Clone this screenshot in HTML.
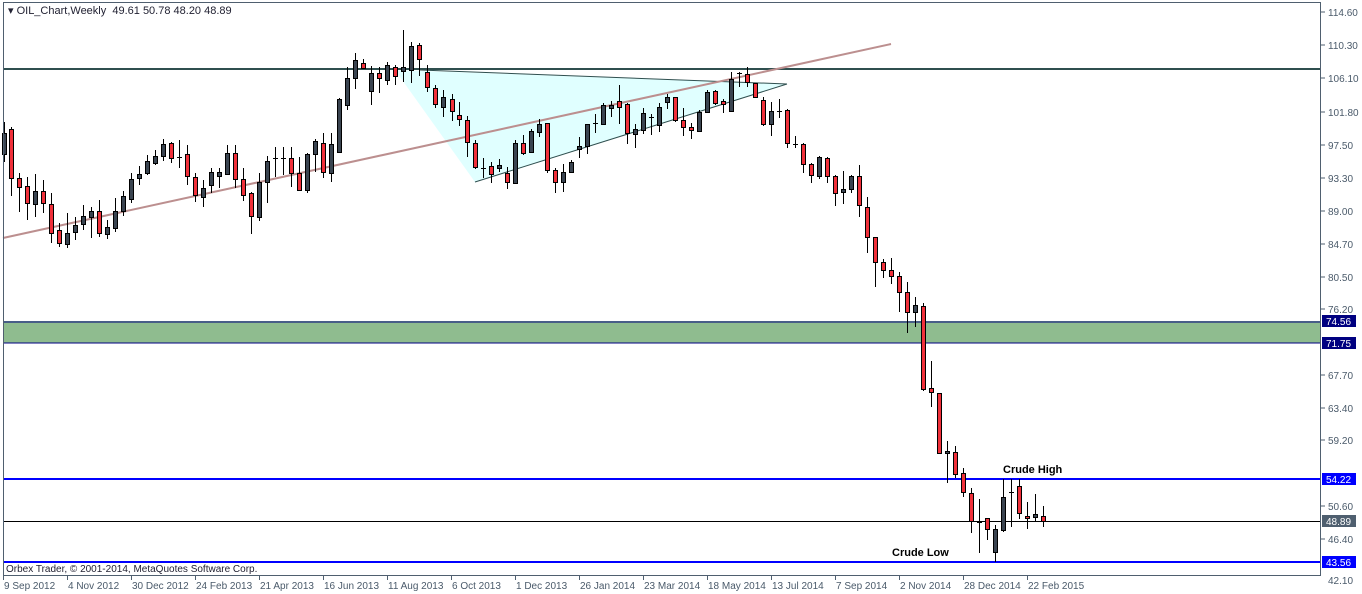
<!DOCTYPE html>
<html><head><meta charset="utf-8"><style>
html,body{margin:0;padding:0;background:#fff;width:1362px;height:594px;overflow:hidden}
svg{display:block}
text{font-family:"Liberation Sans",sans-serif;font-size:10px;fill:#4a5a6a}
</style></head><body>
<svg id="s" width="1362" height="594" xmlns="http://www.w3.org/2000/svg">
<rect x="0" y="0" width="1362" height="594" fill="#fff"/>
<rect x="3" y="321" width="1318" height="22" fill="#8FBC8F"/>
<line x1="3" y1="322" x2="1321" y2="322" stroke="#000080" stroke-width="1"/>
<line x1="3" y1="343" x2="1321" y2="343" stroke="#000080" stroke-width="1"/>
<polygon points="395,70 787,84 475,182" fill="#E0FFFF"/>
<line x1="420" y1="70" x2="787" y2="84" stroke="#2F4F4F" stroke-width="1"/>
<line x1="475" y1="182" x2="787" y2="84" stroke="#2F4F4F" stroke-width="1"/>
<line x1="3" y1="69" x2="1321" y2="69" stroke="#2F4F4F" stroke-width="2"/>
<line x1="3" y1="238" x2="891" y2="44" stroke="#BC8F8F" stroke-width="2"/>
<line x1="3" y1="479" x2="1321" y2="479" stroke="#0000FF" stroke-width="2"/>
<line x1="3" y1="562" x2="1321" y2="562" stroke="#0000FF" stroke-width="2"/>
<line x1="3" y1="521.5" x2="1321" y2="521.5" stroke="#000" stroke-width="1"/>
<g id="c"></g>
<rect x="3.5" y="2.5" width="1317" height="573" fill="none" stroke="#4F5F6F" stroke-width="1"/>
<text x="8" y="14" style="font-size:11px;fill:#223">▾ OIL_Chart,Weekly&#160;&#160;49.61 50.78 48.20 48.89</text>
<text x="6" y="572" style="font-size:10px;fill:#223">Orbex Trader, © 2001-2014, MetaQuotes Software Corp.</text>
<text x="1003" y="473" style="font-size:11px;font-weight:bold;fill:#000">Crude High</text>
<text x="892" y="556" style="font-size:11px;font-weight:bold;fill:#000">Crude Low</text>
<g id="ax"></g>
</svg>
<script>
var C=[
[4,133,154,122,162,'d'],[11,129,178,127,196,'r'],[19,178,187,173,212,'r'],[27,186,203,177,220,'r'],[35,191,204,174,217,'d'],[43,191,203,180,213,'r'],[51,204,233,193,243,'r'],[59,230,243,223,247,'r'],[67,233,244,213,248,'d'],[75,225,232,217,240,'d'],[83,216,224,205,230,'d'],[91,211,217,207,238,'d'],[99,211,233,200,237,'r'],[107,227,234,220,239,'d'],[115,211,228,198,232,'d'],[123,196,211,191,216,'d'],[131,179,199,173,203,'d'],[139,174,178,166,185,'d'],[147,161,173,155,175,'d'],[155,156,163,150,165,'d'],[163,144,156,139,161,'d'],[171,143,158,142,163,'r'],[179,157,157,140,168,'j'],[187,154,176,145,185,'r'],[195,177,195,173,202,'r'],[203,188,197,180,207,'d'],[211,172,185,168,193,'d'],[219,172,176,168,188,'d'],[227,153,174,145,175,'d'],[235,153,179,145,188,'r'],[243,179,195,168,201,'r'],[251,193,216,192,234,'r'],[259,182,217,173,221,'d'],[267,161,182,156,203,'d'],[275,158,158,147,177,'j'],[283,158,158,147,175,'j'],[291,158,173,147,187,'r'],[299,173,190,157,191,'r'],[307,154,190,153,193,'d'],[315,141,154,139,172,'d'],[323,143,172,133,178,'r'],[331,144,173,133,182,'d'],[339,99,152,98,153,'d'],[347,78,105,67,110,'d'],[355,60,78,53,89,'d'],[363,63,68,59,68,'r'],[371,73,91,66,105,'d'],[379,73,78,67,93,'r'],[387,65,80,62,85,'d'],[395,67,76,65,85,'r'],[403,67,71,30,82,'d'],[411,46,70,42,83,'d'],[419,45,59,43,76,'r'],[427,72,87,65,92,'r'],[435,88,104,85,108,'r'],[443,97,107,90,117,'d'],
[452,99,111,94,121,'r'],[459,115,119,102,126,'r'],[467,120,142,116,157,'r'],[475,143,167,140,169,'r'],[483,168,168,158,178,'j'],[491,166,174,162,183,'r'],[499,165,168,159,172,'d'],[507,173,182,167,189,'r'],[515,143,183,140,183,'d'],[523,143,153,135,155,'r'],[531,131,152,129,152,'d'],[539,124,132,119,137,'d'],[547,123,170,123,173,'r'],[555,170,182,168,193,'r'],[563,172,182,164,192,'d'],[571,162,172,160,172,'d'],[579,146,149,137,158,'d'],[587,124,146,124,154,'d'],[595,123,123,114,133,'j'],[603,105,124,103,125,'d'],[611,105,108,101,117,'d'],[619,101,107,85,124,'r'],[627,104,133,103,144,'r'],[635,129,134,124,148,'d'],[643,113,130,108,134,'d'],[651,117,117,114,135,'j'],[659,107,125,103,132,'d'],[667,97,102,94,109,'d'],[675,97,120,97,122,'r'],[683,120,127,108,136,'r'],[691,127,130,123,139,'r'],[699,112,131,110,132,'d'],[707,92,112,90,113,'d'],[715,91,103,90,105,'r'],[723,101,104,99,113,'r'],[731,79,111,72,112,'d'],[739,73,73,72,87,'j'],[747,74,82,67,87,'r'],[755,83,97,83,98,'r'],[763,100,124,97,126,'r'],[771,111,124,102,136,'d'],[779,111,111,99,118,'j'],[787,110,143,109,148,'r'],[795,144,144,136,148,'j'],[803,144,164,143,173,'r'],[811,164,175,163,183,'r'],[819,157,176,156,179,'d'],[827,158,176,157,183,'r'],[835,176,193,175,206,'r'],[843,189,192,171,204,'d'],[851,176,189,175,193,'d'],[859,176,205,165,217,'r'],[867,207,237,197,253,'r'],[875,237,262,237,287,'r'],[883,262,270,259,278,'r'],[891,270,276,258,284,'r'],[899,276,292,272,312,'r'],[907,292,312,282,333,'r'],[915,305,312,297,327,'d'],[923,306,389,303,391,'r'],[931,388,392,361,407,'r'],[939,393,453,393,453,'r'],[947,451,453,441,483,'d'],[955,452,474,446,478,'r'],[963,473,492,468,497,'r'],[971,493,521,488,533,'r'],[979,522,522,499,553,'j'],[987,518,529,518,540,'r'],[995,529,552,525,562,'d'],[1003,497,530,479,532,'d'],[1011,492,492,479,527,'j'],[1019,486,513,479,519,'r'],[1027,516,518,502,529,'r'],[1035,514,517,494,522,'d'],[1043,516,521,506,527,'r']];
var h='';
C.forEach(function(c){var x=c[0];
h+='<line x1="'+(x+.5)+'" y1="'+c[3]+'" x2="'+(x+.5)+'" y2="'+c[4]+'" stroke="#000" stroke-width="1"/>';
if(c[5]=='j'){h+='<line x1="'+(x-2)+'" y1="'+(c[1]+.5)+'" x2="'+(x+3)+'" y2="'+(c[1]+.5)+'" stroke="#000"/>';}
else{var hh=Math.max(c[2]-c[1],2);h+='<rect x="'+(x-1.5)+'" y="'+(c[1]+.5)+'" width="4" height="'+hh+'" fill="'+(c[5]=='r'?'#F0303A':'#3A4450')+'" stroke="#000" stroke-width="1"/>';}
});
document.getElementById('c').innerHTML=h;
var a='';
var P=[['114.60',12],['110.30',45],['106.10',78],['101.80',112],['97.50',145],['93.30',178],['89.00',211],['84.70',244],['80.50',277],['76.20',309],['67.70',375],['63.40',408],['59.20',440],['50.60',506],['46.40',539]];
P.forEach(function(p){a+='<line x1="1321" y1="'+p[1]+'" x2="1325" y2="'+p[1]+'" stroke="#4F5F6F"/><text x="1328" y="'+(p[1]+4)+'">'+p[0]+'</text>';});
a+='<text x="1328" y="584">42.10</text>';
var L=[['74.56',321,'#000080'],['71.75',343,'#000080'],['54.22',479,'#0000FF'],['48.89',521,'#4F5F6F'],['43.56',562,'#0000FF']];
L.forEach(function(l){a+='<rect x="1322" y="'+(l[1]-6)+'" width="34" height="12" fill="'+l[2]+'"/><text x="1326" y="'+(l[1]+4)+'" style="fill:#fff">'+l[0]+'</text>';});
var D=['9 Sep 2012','4 Nov 2012','30 Dec 2012','24 Feb 2013','21 Apr 2013','16 Jun 2013','11 Aug 2013','6 Oct 2013','1 Dec 2013','26 Jan 2014','23 Mar 2014','18 May 2014','13 Jul 2014','7 Sep 2014','2 Nov 2014','28 Dec 2014','22 Feb 2015'];
D.forEach(function(d,i){var x=3+i*64;a+='<line x1="'+(x+.5)+'" y1="576" x2="'+(x+.5)+'" y2="580" stroke="#4F5F6F"/><text x="'+(x+1)+'" y="589">'+d+'</text>';});
document.getElementById('ax').innerHTML=a;
</script>
</body></html>
